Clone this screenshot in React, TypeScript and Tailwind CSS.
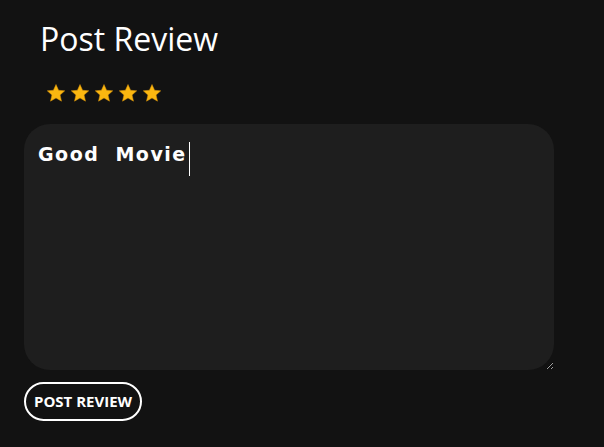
import { useState } from "react";

function Star() {
  return (
    <svg viewBox="0 0 24 24" className="w-[20px] h-[20px]">
      <path
        d="M12 1.8l3.1 6.9 7.4.7-5.6 5 1.7 7.4L12 18l-6.6 3.8 1.7-7.4-5.6-5 7.4-.7z"
        fill="#fbb710"
        stroke="#d9930a"
        strokeWidth="0.6"
      />
    </svg>
  );
}

export default function App() {
  const [text, setText] = useState("Good Movie");

  return (
    <div className="min-h-screen w-full bg-[#121212] px-6 pt-[18px] font-['Open_Sans',sans-serif]">
      <h1 className="pl-4 text-[32px] leading-[42px] text-white">Post Review</h1>

      <div className="mt-[23px] flex gap-[4px] pl-[22px]">
        {[1, 2, 3, 4, 5].map((i) => (
          <Star key={i} />
        ))}
      </div>

      <div className="relative mt-[21px] w-[530px]">
        <textarea
          value={text}
          onChange={(e) => setText(e.target.value)}
          className="block h-[246px] w-[530px] rounded-[26px] bg-[#1e1e1e] px-[14px] py-[16px] text-[19px] leading-[28px] font-bold tracking-[1.5px] [word-spacing:8px] text-white caret-transparent outline-none font-['DejaVu_Sans',sans-serif]"
        />
        <span className="pointer-events-none absolute left-[165px] top-[18px] h-[34px] w-px bg-white" />
      </div>

      <button className="mt-[12px] rounded-full border-2 border-white px-[8px] py-[7px] text-[15px] leading-[21px] font-bold text-white">
        POST REVIEW
      </button>
    </div>
  );
}
